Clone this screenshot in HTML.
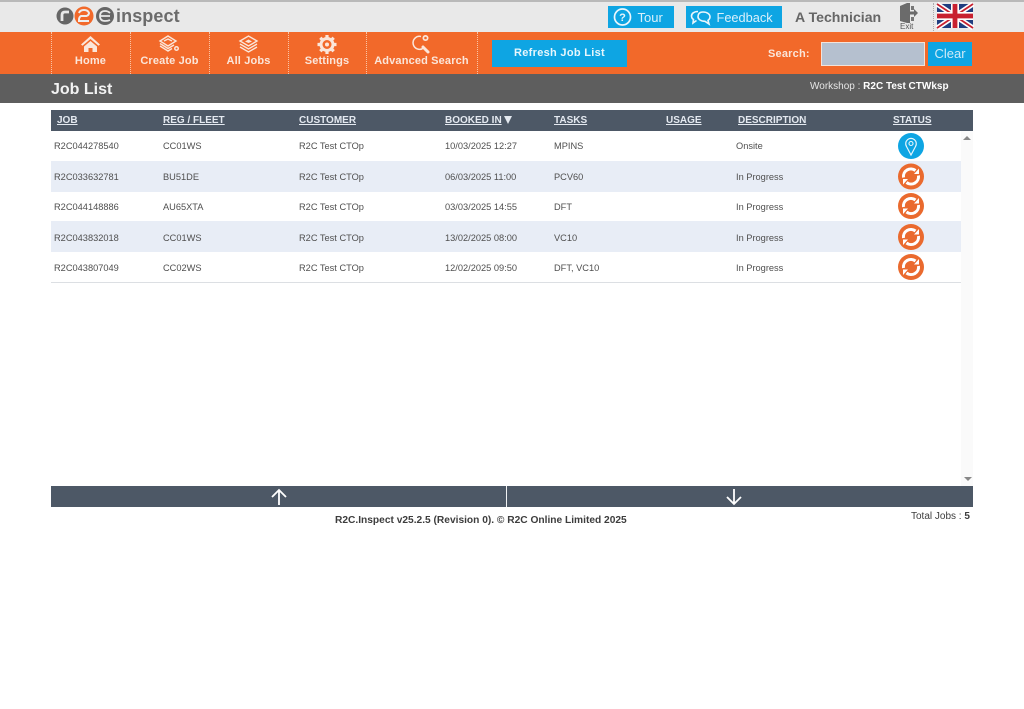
<!DOCTYPE html>
<html><head><meta charset="utf-8"><title>Job List</title>
<style>
html,body{margin:0;padding:0;background:#fff;width:1024px;height:709px;overflow:hidden}
body{font-family:"Liberation Sans",sans-serif;position:relative}
.a{position:absolute;white-space:nowrap}
.b{position:absolute}
.nav{color:#fbe6da;font-weight:bold;font-size:11px;letter-spacing:.15px;top:55px;line-height:12px;text-align:center}
.sep{position:absolute;top:32px;height:42px;border-left:1px dotted #f9c4a6;width:0}
.th{top:114px;margin-top:1px;font-size:10px;line-height:12px;font-weight:bold;color:#e4e9f0;text-decoration:underline}
.td{font-size:9.25px;line-height:12px;color:#4f4f4f}
svg{position:absolute;overflow:visible}
</style></head><body>
<div class="b" style="left:0;top:0;width:1024px;height:2px;background:#b9b9b9"></div>
<div class="b" style="left:0;top:2px;width:1024px;height:30px;background:#e9e9e9"></div>
<div class="b" style="left:0;top:32px;width:1024px;height:42px;background:#f2692a"></div>
<div class="b" style="left:0;top:74px;width:1024px;height:29px;background:#5e5e5e"></div>

<!-- logo -->
<svg style="left:56px;top:4px" width="60" height="24" viewBox="0 0 60 24">
<circle cx="9" cy="12" r="8.500" fill="#666"/><path d="M6 17v-6q0-3 3-3h4" fill="none" stroke="#e9e9e9" stroke-width="2.800"/>
<circle cx="49" cy="12" r="9" fill="#666"/><path d="M44 12h10M54 9q-2-2-5-2-5 0-5 5t5 5q3 0 5-1" fill="none" stroke="#e9e9e9" stroke-width="1.800"/>
<circle cx="28" cy="12" r="9.500" fill="#f2692a"/><path d="M23 9q1-3 5-3t5 3q0 2-2.500 3H25q-2 1-2 4v1h10" fill="none" stroke="#eee" stroke-width="2"/>
</svg>
<div class="a" style="left:116px;top:5px;font-size:18px;line-height:22px;font-weight:bold;color:#6b6b6b;letter-spacing:.1px">inspect</div>

<!-- top buttons -->
<div class="b" style="left:608px;top:6px;width:66px;height:22px;background:#0ea5e3"></div>
<svg style="left:613px;top:8px" width="19" height="18"><circle cx="9.500" cy="9" r="8" fill="none" stroke="#eaf6fc" stroke-width="1.700"/><text x="9.500" y="13" font-family="Liberation Sans" font-size="11" font-weight="bold" fill="#eaf6fc" text-anchor="middle">?</text></svg>
<div class="a" style="left:637.500px;top:9px;font-size:13px;line-height:17px;color:#d9f0fb">Tour</div>
<div class="b" style="left:686px;top:6px;width:96px;height:22px;background:#0ea5e3"></div>
<svg style="left:690px;top:9px" width="22" height="17" fill="none" stroke="#eaf6fc" stroke-width="1.600"><path d="M8 2.500C4 2.500 1.500 4.500 1.500 7c0 1.500.8 2.700 2 3.500L3 14l3.500-2.500"/><path d="M13 3c4 0 7 2 7 4.800 0 1.600-.8 2.800-2 3.600l1 3.600-4-2.700c-4 0-7-2-7-4.500S9 3 13 3z"/></svg>
<div class="a" style="left:716.500px;top:9px;font-size:12.800px;line-height:17px;color:#d9f0fb">Feedback</div>
<div class="a" style="left:795px;top:9px;font-size:14.100px;line-height:17px;font-weight:bold;color:#666">A Technician</div>

<!-- exit -->
<svg style="left:899px;top:3px" width="20" height="20"><path d="M1 3l7-3h3v20H8l-7-2z" fill="#6b6b6b"/><path d="M12 3h3v4h-3zM12 14h3v4h-3z" fill="#777"/><path d="M10 8.500h5V6l4 4-4 4v-2.500h-5z" fill="#6b6b6b"/></svg>
<div class="a" style="left:900px;top:22px;font-size:8px;line-height:9px;color:#555">Exit</div>
<div class="b" style="left:933px;top:3px;height:28px;border-left:1px dotted #aaa"></div>

<!-- flag -->
<svg style="left:937px;top:4px" width="36" height="24" viewBox="0 0 36 24">
<rect width="36" height="24" fill="#1f3d80"/>
<path d="M0 0L36 24M36 0L0 24" stroke="#fff" stroke-width="5"/>
<path d="M0 0L36 24M36 0L0 24" stroke="#c8202f" stroke-width="1.800"/>
<path d="M18 0v24M0 12h36" stroke="#fff" stroke-width="8"/>
<path d="M18 0v24M0 12h36" stroke="#c8202f" stroke-width="4.800"/>
</svg>

<!-- nav -->
<div class="sep" style="left:51px"></div>
<div class="sep" style="left:130px"></div>
<div class="sep" style="left:209px"></div>
<div class="sep" style="left:288px"></div>
<div class="sep" style="left:366px"></div>
<div class="sep" style="left:477px"></div>

<svg style="left:81px;top:36px" width="19" height="17" fill="#fbe6da"><path d="M9.500 0L0 8.500l1.500 1.300L9.500 3l8 6.800L19 8.500z"/><path d="M3 10.500L9.500 5l6.500 5.500V16h-4.500v-4h-4v4H3z"/></svg>
<div class="a nav" style="left:51px;width:79px">Home</div>

<svg style="left:159px;top:35px" width="22" height="18" fill="none" stroke="#fbe6da" stroke-width="1.400"><path d="M1 6l8-5 8 5-8 5z"/><path d="M1 8.500l8 5 6-3.500M1 11l8 5 4-2.500"/><circle cx="17.500" cy="13.500" r="2.500" fill="#fbe6da" stroke="none"/><circle cx="17.500" cy="13.500" r="1" fill="#f2692a" stroke="none"/><path d="M5 6l4-2 4 2" /></svg>
<div class="a nav" style="left:130px;width:79px">Create Job</div>

<svg style="left:239px;top:35px" width="19" height="18" fill="none" stroke="#fbe6da" stroke-width="1.400"><path d="M1 6l8.500-5L18 6l-8.500 5z"/><path d="M1 9l8.500 5L18 9M1 12l8.500 5 8.500-5"/><path d="M6 6.500l3.500-2 3.500 2-3.500 1.500z" fill="#fbe6da" stroke="none"/></svg>
<div class="a nav" style="left:209px;width:79px">All Jobs</div>

<svg style="left:317px;top:35px" width="20" height="19" viewBox="0 0 20 19"><g transform="translate(10 9.500)"><circle r="6" fill="none" stroke="#fbe6da" stroke-width="3"/><g stroke="#fbe6da" stroke-width="3.200"><path d="M0-9.500v3M0 6.500v3M-9.500 0h3M6.500 0h3M-6.700-6.700l2 2M4.700 4.700l2 2M6.700-6.700l-2 2M-4.700 4.700l-2 2"/></g><circle r="2" fill="#fbe6da"/></g></svg>
<div class="a nav" style="left:288px;width:78px">Settings</div>

<svg style="left:412px;top:34px" width="20" height="20" fill="none"><path d="M9 2.500A6.500 6.500 0 1 0 11.500 14" stroke="#fbe6da" stroke-width="1.500"/><path d="M11 13l5 5" stroke="#fbe6da" stroke-width="3" stroke-linecap="round"/><circle cx="13.500" cy="4" r="3" fill="#fbe6da"/><circle cx="13.500" cy="4" r="1.300" fill="#f2692a"/></svg>
<div class="a nav" style="left:366px;width:111px">Advanced Search</div>

<div class="a" style="left:492px;top:40px;width:135px;height:27px;background:#0ea5e3;color:#e8f6fc;font-weight:bold;font-size:11px;letter-spacing:.3px;line-height:27px;text-align:center">Refresh Job List</div>

<div class="a" style="left:768px;top:48px;font-size:11px;line-height:13px;font-weight:bold;color:#fbe6da;letter-spacing:.2px">Search:</div>
<div class="b" style="left:821px;top:42px;width:102px;height:22px;background:#b5c0cf;border:1px solid #f3e3da"></div>
<div class="a" style="left:928px;top:42px;width:44px;height:24px;background:#0ea5e3;color:#cfeaf7;font-size:13px;line-height:24px;text-align:center">Clear</div>

<!-- title bar -->
<div class="a" style="left:51px;top:80px;font-size:16px;line-height:19px;font-weight:bold;color:#f3f3f3">Job List</div>
<div class="a" style="left:810px;top:80px;font-size:10px;line-height:13px;color:#e6e6e6">Workshop : <b style="color:#fff">R2C Test CTWksp</b></div>

<!-- table header -->
<div class="b" style="left:51px;top:110px;width:922px;height:21px;background:#4d5866"></div>
<div class="a th" style="left:57px">JOB</div>
<div class="a th" style="left:163px">REG / FLEET</div>
<div class="a th" style="left:299px">CUSTOMER</div>
<div class="a th" style="left:445px">BOOKED IN</div>
<div class="b" style="left:504px;top:116px;width:0;height:0;border-left:4.500px solid transparent;border-right:4.500px solid transparent;border-top:8px solid #e4e9f0"></div>
<div class="a th" style="left:554px">TASKS</div>
<div class="a th" style="left:666px">USAGE</div>
<div class="a th" style="left:738px">DESCRIPTION</div>
<div class="a th" style="left:893px">STATUS</div>

<!-- scroll -->
<div class="b" style="left:961px;top:131px;width:12px;height:355px;background:#fafafa"></div>
<div class="a" style="left:963px;top:136px;width:0;height:0;border-left:4px solid transparent;border-right:4px solid transparent;border-bottom:4px solid #888"></div>
<div class="a" style="left:964px;top:477px;width:0;height:0;border-left:4px solid transparent;border-right:4px solid transparent;border-top:4px solid #888"></div>

<!-- rows -->
<div class="b" style="left:51px;top:161px;width:910px;height:31px;background:#e8edf6"></div>
<div class="b" style="left:51px;top:221px;width:910px;height:31px;background:#e8edf6"></div>
<div class="b" style="left:51px;top:282px;width:910px;height:1px;background:#dcdfe3"></div>

<div class="a td" style="left:54px;top:140px">R2C044278540</div><div class="a td" style="left:163px;top:140px">CC01WS</div><div class="a td" style="left:299px;top:140px">R2C Test CTOp</div><div class="a td" style="left:445px;top:140px">10/03/2025 12:27</div><div class="a td" style="left:554px;top:140px">MPINS</div><div class="a td" style="left:736px;top:140px">Onsite</div>
<div class="a td" style="left:54px;top:171px">R2C033632781</div><div class="a td" style="left:163px;top:171px">BU51DE</div><div class="a td" style="left:299px;top:171px">R2C Test CTOp</div><div class="a td" style="left:445px;top:171px">06/03/2025 11:00</div><div class="a td" style="left:554px;top:171px">PCV60</div><div class="a td" style="left:736px;top:171px">In Progress</div>
<div class="a td" style="left:54px;top:201px">R2C044148886</div><div class="a td" style="left:163px;top:201px">AU65XTA</div><div class="a td" style="left:299px;top:201px">R2C Test CTOp</div><div class="a td" style="left:445px;top:201px">03/03/2025 14:55</div><div class="a td" style="left:554px;top:201px">DFT</div><div class="a td" style="left:736px;top:201px">In Progress</div>
<div class="a td" style="left:54px;top:232px">R2C043832018</div><div class="a td" style="left:163px;top:232px">CC01WS</div><div class="a td" style="left:299px;top:232px">R2C Test CTOp</div><div class="a td" style="left:445px;top:232px">13/02/2025 08:00</div><div class="a td" style="left:554px;top:232px">VC10</div><div class="a td" style="left:736px;top:232px">In Progress</div>
<div class="a td" style="left:54px;top:262px">R2C043807049</div><div class="a td" style="left:163px;top:262px">CC02WS</div><div class="a td" style="left:299px;top:262px">R2C Test CTOp</div><div class="a td" style="left:445px;top:262px">12/02/2025 09:50</div><div class="a td" style="left:554px;top:262px">DFT, VC10</div><div class="a td" style="left:736px;top:262px">In Progress</div>

<!-- status icons -->
<svg style="left:0;top:0" width="1024" height="709">
<defs>
<g id="s"><circle r="13" fill="#ea6a2e"/><path d="M-7.500 1A7.500 7.500 0 0 1 4.500-6M7.500-1A7.500 7.500 0 0 1-4.500 6" fill="none" stroke="#fff" stroke-width="3"/><path d="M8-8V-2.500H3zM-8 8V2.500H-3z" fill="#fff"/></g>
</defs>
<circle cx="911" cy="146" r="13" fill="#0ea5e3"/>
<path d="M911 155l-4.500-8.500a5.300 5.300 0 1 1 9 0z" fill="none" stroke="#e8f6fc" stroke-width="1.200"/><circle cx="911" cy="143.500" r="2" fill="none" stroke="#e8f6fc" stroke-width="1.100"/>
<use href="#s" x="911" y="176.500"/>
<use href="#s" x="911" y="206"/>
<use href="#s" x="911" y="237"/>
<use href="#s" x="911" y="267"/>
</svg>

<!-- bottom scroll -->
<div class="b" style="left:51px;top:486px;width:922px;height:21px;background:#4d5866"></div>
<div class="b" style="left:506px;top:486px;width:1px;height:21px;background:#f0f2f4"></div>
<svg style="left:270px;top:488px" width="18" height="18" fill="none" stroke="#fff" stroke-width="1.800"><path d="M9 17V2M2 9l7-7 7 7"/></svg>
<svg style="left:725px;top:488px" width="18" height="18" fill="none" stroke="#fff" stroke-width="1.800"><path d="M9 1v15M2 9l7 7 7-7"/></svg>

<div class="a" style="left:335px;top:514px;font-size:10.200px;line-height:13px;font-weight:bold;color:#3d3d3d">R2C.Inspect v25.2.5 (Revision 0). © R2C Online Limited 2025</div>
<div class="a" style="left:911px;top:510px;font-size:10px;line-height:13px;color:#3d3d3d">Total Jobs : <b>5</b></div>
</body></html>
